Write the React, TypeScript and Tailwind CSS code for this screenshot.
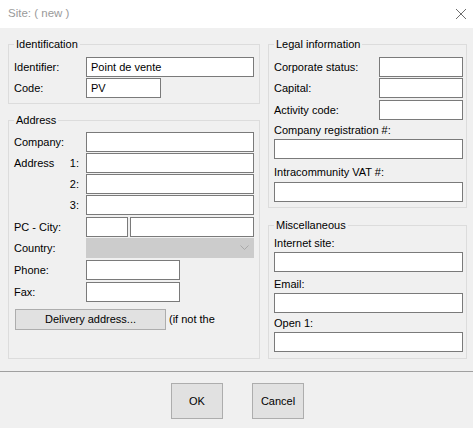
import React from "react";

const font = { fontFamily: '"Liberation Sans", Arial, sans-serif' };

function Box({ w, value, className = "" }: { w: string; value?: string; className?: string }) {
  return (
    <input
      readOnly
      defaultValue={value ?? ""}
      className={`${w} h-[20px] shrink-0 border border-[#7a7a7a] bg-white px-[4px] text-[11px] leading-[18px] text-black outline-none ${className}`}
    />
  );
}

function Label({ children, w = "w-[72px]" }: { children: React.ReactNode; w?: string }) {
  return <div className={`${w} shrink-0 text-[11px] leading-[13px] text-black`}>{children}</div>;
}

function Group({
  title,
  className,
  children,
}: {
  title: string;
  className: string;
  children: React.ReactNode;
}) {
  return (
    <fieldset className={`min-w-0 border border-[#dcdcdc] ${className}`}>
      <legend className="px-[2px] text-[11px] leading-[14px] text-black">{title}</legend>
      {children}
    </fieldset>
  );
}

export default function App() {
  return (
    <div className="flex h-[428px] w-[473px] flex-col bg-[#f0f0f0]" style={font}>
      {/* Title bar */}
      <div className="flex h-[28px] shrink-0 items-center justify-between bg-white pl-[8px] pr-[6px]">
        <span className="text-[11.5px] text-[#9a9a9a]">Site: ( new )</span>
        <svg width="12" height="12" viewBox="0 0 12 12">
          <path d="M1 1 L11 11 M11 1 L1 11" stroke="#6e6e6e" strokeWidth="1" />
        </svg>
      </div>

      {/* Body */}
      <div className="flex h-[343px] shrink-0 gap-[8px] pl-[8px] pt-[9px]">
        {/* Left column */}
        <div className="flex w-[252px] flex-col gap-[9px]">
          <Group title="Identification" className="px-[5px] pt-[6px] pb-[5px]">
            <div className="flex flex-col gap-[1px]">
              <div className="flex items-center">
                <Label>Identifier:</Label>
                <Box w="w-[168px]" value="Point de vente" />
              </div>
              <div className="flex items-center">
                <Label>Code:</Label>
                <Box w="w-[75px]" value="PV" />
              </div>
            </div>
          </Group>

          <Group title="Address" className="px-[5px] pt-[5px] pb-[28px]">
            <div className="flex flex-col">
              <div className="flex items-center">
                <Label>Company:</Label>
                <Box w="w-[168px]" />
              </div>
              <div className="mt-[1px] flex items-center">
                <div className="flex w-[72px] shrink-0 pr-[7px] text-[11px] leading-[13px]">
                  <span>Address</span>
                  <span className="ml-auto">1:</span>
                </div>
                <Box w="w-[168px]" />
              </div>
              <div className="mt-[1px] flex items-center">
                <div className="flex w-[72px] shrink-0 justify-end pr-[7px] text-[11px] leading-[13px]">2:</div>
                <Box w="w-[168px]" />
              </div>
              <div className="mt-[1px] flex items-center">
                <div className="flex w-[72px] shrink-0 justify-end pr-[7px] text-[11px] leading-[13px]">3:</div>
                <Box w="w-[168px]" />
              </div>
              <div className="mt-[2px] flex items-center">
                <Label>PC - City:</Label>
                <Box w="w-[42px]" />
                <Box w="w-[124px]" className="ml-[2px]" />
              </div>
              <div className="mt-[1px] flex items-center">
                <Label>Country:</Label>
                <div className="flex h-[20px] w-[168px] items-center justify-end border border-[#cccccc] bg-[#cccccc] pr-[4px]">
                  <svg width="9" height="6" viewBox="0 0 9 6">
                    <path d="M0.5 0.5 L4.5 4.5 L8.5 0.5" fill="none" stroke="#a9a9a9" strokeWidth="1" />
                  </svg>
                </div>
              </div>
              <div className="mt-[2px] flex items-center">
                <Label>Phone:</Label>
                <Box w="w-[94px]" />
              </div>
              <div className="mt-[2px] flex items-center">
                <Label>Fax:</Label>
                <Box w="w-[94px]" />
              </div>
              <div className="mt-[7px] flex items-center">
                <button className="ml-[1px] h-[21px] w-[151px] border border-[#adadad] bg-[#e1e1e1] text-[11px] leading-[13px] text-black">
                  Delivery address...
                </button>
                <span className="ml-[3px] whitespace-nowrap text-[11px] leading-[13px]">(if not the</span>
              </div>
            </div>
          </Group>
        </div>

        {/* Right column */}
        <div className="flex w-[199px] flex-col gap-[10px]">
          <Group title="Legal information" className="pl-[5px] pr-[3px] pt-[6px] pb-[5px]">
            <div className="flex flex-col">
              <div className="flex items-center">
                <Label w="w-[105px]">Corporate status:</Label>
                <Box w="w-[84px]" />
              </div>
              <div className="mt-[1px] flex items-center">
                <Label w="w-[105px]">Capital:</Label>
                <Box w="w-[84px]" />
              </div>
              <div className="mt-[2px] flex items-center">
                <Label w="w-[105px]">Activity code:</Label>
                <Box w="w-[84px]" />
              </div>
              <div className="mt-[4px] text-[11px] leading-[13px]">Company registration #:</div>
              <Box w="w-full" className="mt-[2px]" />
              <div className="mt-[7px] text-[11px] leading-[13px]">Intracommunity VAT #:</div>
              <Box w="w-full" className="mt-[3px]" />
            </div>
          </Group>

          <Group title="Miscellaneous" className="pl-[5px] pr-[3px] pt-[5px] pb-[6px]">
            <div className="flex flex-col">
              <div className="text-[11px] leading-[13px]">Internet site:</div>
              <Box w="w-full" className="mt-[2px]" />
              <div className="mt-[6px] text-[11px] leading-[13px]">Email:</div>
              <Box w="w-full" className="mt-[2px]" />
              <div className="mt-[4px] text-[11px] leading-[13px]">Open 1:</div>
              <Box w="w-full" className="mt-[2px]" />
            </div>
          </Group>
        </div>
      </div>

      {/* Separator */}
      <div className="h-[1px] shrink-0 bg-[#a0a0a0]" />

      {/* Footer */}
      <div className="flex justify-center gap-[29px] pl-[2px] pt-[11px]">
        <button className="h-[36px] w-[52px] border border-[#adadad] bg-[#e1e1e1] text-[11px] text-black">OK</button>
        <button className="h-[36px] w-[52px] border border-[#adadad] bg-[#e1e1e1] text-[11px] text-black">Cancel</button>
      </div>
    </div>
  );
}
